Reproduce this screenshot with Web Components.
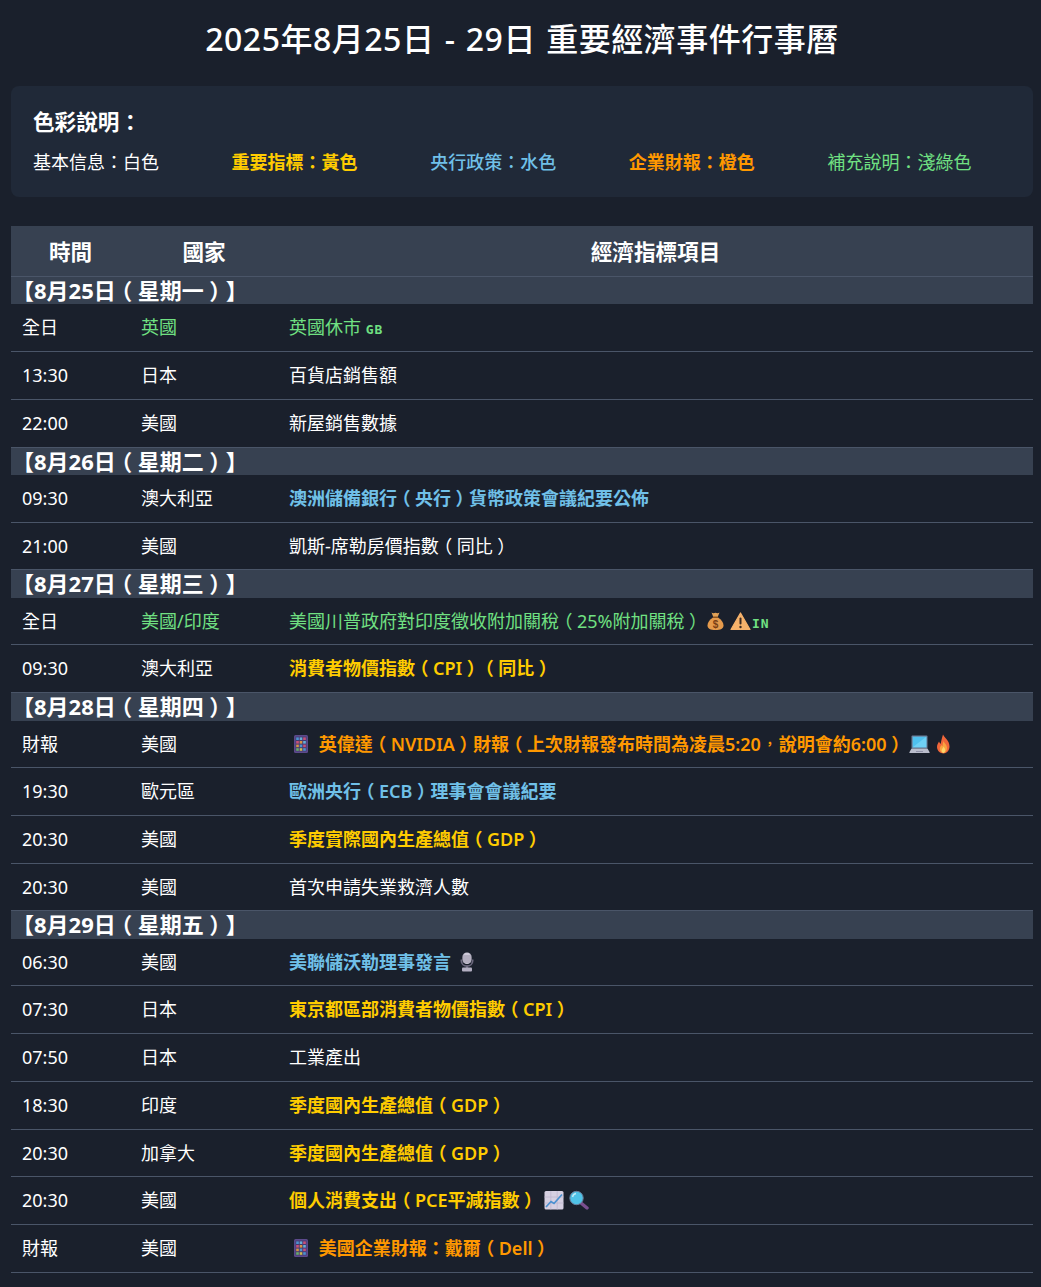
<!DOCTYPE html>
<html lang="zh-TW">
<head>
<meta charset="utf-8">
<title>重要經濟事件行事曆</title>
<style>
  html, body { margin: 0; background: #1a202c; }
  body {
    padding: 0 8px 15px 11px;
    color: #fff;
    font-family: "Noto Sans", "Noto Sans CJK TC", sans-serif;
    font-size: 18px;
    text-spacing-trim: space-all;
  }
</style>
</head>
<body>
<cal-title>2025年8月25日 - 29日 重要經濟事件行事曆</cal-title>

<cal-legend heading="色彩說明：">
  <span style="color:#fff">基本信息：白色</span>
  <span style="color:#ffcc00;font-weight:700">重要指標：黃色</span>
  <span style="color:#70c0e8;font-weight:500">央行政策：水色</span>
  <span style="color:#ff9800;font-weight:700">企業財報：橙色</span>
  <span style="color:#70e082">補充說明：淺綠色</span>
</cal-legend>

<cal-table>
  <cal-day>【8月25日（星期一）】</cal-day>
  <cal-row time="全日" country="英國" tone="note" country-tone="note">英國休市 <cal-flag>GB</cal-flag></cal-row>
  <cal-row time="13:30" country="日本">百貨店銷售額</cal-row>
  <cal-row time="22:00" country="美國">新屋銷售數據</cal-row>

  <cal-day>【8月26日（星期二）】</cal-day>
  <cal-row time="09:30" country="澳大利亞" tone="bank">澳洲儲備銀行（央行）貨幣政策會議紀要公佈</cal-row>
  <cal-row time="21:00" country="美國">凱斯-席勒房價指數（同比）</cal-row>

  <cal-day>【8月27日（星期三）】</cal-day>
  <cal-row time="全日" country="美國/印度" tone="note" country-tone="note">美國川普政府對印度徵收附加關稅（25%附加關稅）<cal-icon name="money"></cal-icon><cal-icon name="warning"></cal-icon><cal-flag tight>IN</cal-flag></cal-row>
  <cal-row time="09:30" country="澳大利亞" tone="key">消費者物價指數（CPI）（同比）</cal-row>

  <cal-day>【8月28日（星期四）】</cal-day>
  <cal-row time="財報" country="美國" tone="earn"><cal-icon name="phone"></cal-icon> 英偉達（NVIDIA）財報（上次財報發布時間為凌晨5:20，說明會約6:00）<cal-icon name="laptop" style="margin-left:2px"></cal-icon><cal-icon name="fire"></cal-icon></cal-row>
  <cal-row time="19:30" country="歐元區" tone="bank">歐洲央行（ECB）理事會會議紀要</cal-row>
  <cal-row time="20:30" country="美國" tone="key">季度實際國內生產總值（GDP）</cal-row>
  <cal-row time="20:30" country="美國">首次申請失業救濟人數</cal-row>

  <cal-day>【8月29日（星期五）】</cal-day>
  <cal-row time="06:30" country="美國" tone="bank">美聯儲沃勒理事發言 <cal-icon name="mic"></cal-icon></cal-row>
  <cal-row time="07:30" country="日本" tone="key">東京都區部消費者物價指數（CPI）</cal-row>
  <cal-row time="07:50" country="日本">工業產出</cal-row>
  <cal-row time="18:30" country="印度" tone="key">季度國內生產總值（GDP）</cal-row>
  <cal-row time="20:30" country="加拿大" tone="key">季度國內生產總值（GDP）</cal-row>
  <cal-row time="20:30" country="美國" tone="key">個人消費支出（PCE平減指數） <cal-icon name="chart"></cal-icon><cal-icon name="search"></cal-icon></cal-row>
  <cal-row time="財報" country="美國" tone="earn"><cal-icon name="phone"></cal-icon> 美國企業財報：戴爾（Dell）</cal-row>
</cal-table>

<script>
const ICONS = {
  money: `<path d="M8.500 1.500c1.200 .9 2.500 .9 4 .2 1.500 .7 2.800 .7 4-.2l-1.800 4.500h-4.400z" fill="#e2a257"/>
    <path d="M10 6.500h5c3.500 2 5.500 5 5.500 8 0 3.200-2.800 4.500-8 4.500s-8-1.300-8-4.500c0-3 2-6 5.500-8z" fill="#e59a4c"/>
    <rect x="9.800" y="5.400" width="5.400" height="1.500" rx=".7" fill="#8a5320"/>
    <text x="12.500" y="16.500" font-size="10" font-weight="700" text-anchor="middle" fill="#7a3f14" font-family="Liberation Sans">$</text>`,
  warning: `<path d="M12.500 2 22 18.500H3z" fill="#f6b26b" stroke="#f6b26b" stroke-width="1.200" stroke-linejoin="round"/>
    <rect x="11.500" y="6.500" width="2" height="7" rx="1" fill="#3a2a22"/>
    <circle cx="12.500" cy="16" r="1.200" fill="#3a2a22"/>`,
  phone: `<rect x="5" y="1" width="14" height="18" rx="1.500" fill="#5c4a8c"/>
    <rect x="6.500" y="2.500" width="11" height="15" fill="#443a70"/>
    <g opacity=".85">
      <rect x="7.200" y="3.400" width="2.600" height="2.600" fill="#4fa3e0"/><rect x="10.700" y="3.400" width="2.600" height="2.600" fill="#6fc4ea"/><rect x="14.200" y="3.400" width="2.600" height="2.600" fill="#e0567a"/>
      <rect x="7.200" y="7" width="2.600" height="2.600" fill="#e0567a"/><rect x="10.700" y="7" width="2.600" height="2.600" fill="#f2a33c"/><rect x="14.200" y="7" width="2.600" height="2.600" fill="#6fc4ea"/>
      <rect x="7.200" y="10.600" width="2.600" height="2.600" fill="#f2a33c"/><rect x="10.700" y="10.600" width="2.600" height="2.600" fill="#4fa3e0"/><rect x="14.200" y="10.600" width="2.600" height="2.600" fill="#e0567a"/>
      <rect x="7.200" y="14.200" width="2.600" height="2.600" fill="#6fc46a"/><rect x="10.700" y="14.200" width="2.600" height="2.600" fill="#e8d24a"/><rect x="14.200" y="14.200" width="2.600" height="2.600" fill="#4fa3e0"/>
    </g>`,
  laptop: `<rect x="4.500" y="1.500" width="16" height="13" rx="1" fill="#6d7f99"/>
    <rect x="5.700" y="2.700" width="13.600" height="10.600" fill="#4fc0ee"/>
    <path d="M5.700 13.300 19.300 2.700v10.600z" fill="#6fd0f4"/>
    <path d="M4.500 14.500h16l2 3.500a.6.6 0 0 1-.5 1H3a.6.6 0 0 1-.5-1z" fill="#b9bccb"/>
    <rect x="9" y="17" width="7" height="1" fill="#8e90a6"/>`,
  fire: `<path d="M11 .5c1 3 6.500 5.500 6.500 12 0 4-2.800 7-6 7s-6.500-2.800-6.500-6.500c0-2.500 1.200-3.800 2-5.500.5 1.200 1 2 1.800 2.300C9 7 10 4 11 .5z" fill="#f0663a"/>
    <path d="M11.500 7c.6 2 3.500 3.500 3.500 7 0 2.800-1.700 5-3.500 5s-3.700-1.800-3.700-4c0-1.800 1-2.700 1.700-4 .4 .8 .7 1 1 1.200.1-1.700.4-3.300 1-5.200z" fill="#f9a33f"/>
    <path d="M11.500 12.500c.4 1 1.800 1.800 1.800 3.800 0 1.500-.9 2.600-1.800 2.600s-1.900-.9-1.900-2.400c0-1.600 1.500-2.500 1.900-4z" fill="#fbd46a"/>`,
  mic: `<rect x="6.500" y=".5" width="9" height="11.500" rx="4.500" fill="#cdc9d8"/>
    <path d="M6.500 4h9M6.500 6h9M6.500 8h9M6.500 10h9" stroke="#8d899c" stroke-width=".8"/>
    <path d="M5.300 7.500v1.500c0 3 2.700 5 5.700 5s5.700-2 5.700-5V7.500" fill="none" stroke="#6c687e" stroke-width="1.600"/>
    <rect x="9.800" y="13.500" width="2.400" height="2.500" fill="#6c687e"/>
    <rect x="6" y="15.500" width="10" height="4" rx="1" fill="#b3afc2"/>`,
  chart: `<rect x="2.500" y="1" width="19" height="18.500" rx="1.500" fill="#d6d0e2"/>
    <path d="M2.500 7h19M2.500 13h19M8.800 1v18.500M15.200 1v18.500" stroke="#bfb8d0" stroke-width=".8"/>
    <path d="M4 17 9 11.500 12 13.500 20 4.500" fill="none" stroke="#4a90d0" stroke-width="1.700"/>`,
  search: `<path d="M14 13 20 18" stroke="#7a4f90" stroke-width="3.400" stroke-linecap="round"/>
    <circle cx="9.500" cy="8" r="6.700" fill="#4fc3e8" stroke="#6b7f9c" stroke-width="1"/>
    <path d="M5.500 7a4.500 4.500 0 0 1 3.500-3.500" fill="none" stroke="#bfeaf7" stroke-width="1.400"/>`
};

class CalIcon extends HTMLElement {
  constructor() {
    super();
    this.attachShadow({ mode: 'open' }).innerHTML = `
      <style>
        :host { display: inline-block; width: 25px; height: 20px; vertical-align: -3px; }
        svg { display: block; }
      </style>
      <svg width="25" height="20" viewBox="0 0 25 20" aria-hidden="true">${ICONS[this.getAttribute('name')] || ''}</svg>`;
  }
}

class CalFlag extends HTMLElement {
  constructor() {
    super();
    this.attachShadow({ mode: 'open' }).innerHTML = `
      <style>
        :host { font: 700 13px/1 "DejaVu Sans Mono", monospace; letter-spacing: 1px; }
        :host([tight]) { margin-left: -9.500px; }
      </style><slot></slot>`;
  }
}

// full-width brackets sit in the middle of their em box in the reference
class CalPunct extends HTMLElement {
  constructor() {
    super();
    this.attachShadow({ mode: 'open' }).innerHTML = `
      <style>
        :host { display: inline-block; width: 1em; text-align: center; font-feature-settings: "halt"; }
        :host([lift]) { font-size: 0.7em; width: 1.430em; line-height: 1; transform: translateY(-0.25em); }
      </style><slot></slot>`;
  }
}

function centerPunct(el) {
  const walker = document.createTreeWalker(el, NodeFilter.SHOW_TEXT);
  const nodes = [];
  while (walker.nextNode()) nodes.push(walker.currentNode);
  nodes.forEach(node => {
    if (!/[（），]/.test(node.data)) return;
    const frag = document.createDocumentFragment();
    node.data.split(/([（），])/).forEach(part => {
      if (/^[（），]$/.test(part)) {
        const p = document.createElement('cal-punct');
        if (part === '，') p.setAttribute('lift', '');
        p.textContent = part;
        frag.appendChild(p);
      } else if (part) {
        frag.appendChild(document.createTextNode(part));
      }
    });
    node.replaceWith(frag);
  });
}

class CalTitle extends HTMLElement {
  constructor() {
    super();
    this.attachShadow({ mode: 'open' }).innerHTML = `
      <style>
        :host { display: block; padding: 15px 0 23px; text-align: center; }
        h1 {
          margin: 0;
          font-size: 32px;
          line-height: 48px;
          font-weight: 500;
          letter-spacing: 0.5px;
          word-spacing: 1.500px;
          color: #fff;
        }
      </style>
      <h1><slot></slot></h1>`;
  }
}

class CalLegend extends HTMLElement {
  constructor() {
    super();
    this.attachShadow({ mode: 'open' }).innerHTML = `
      <style>
        :host {
          display: block;
          margin-bottom: 29px;
          padding: 22px 22px 20px;
          background: #202938;
          border-radius: 8px;
        }
        h3 { margin: 0 0 12px; font-size: 21.600px; line-height: 28px; font-weight: 700; }
        .items { display: grid; grid-template-columns: repeat(5, 1fr); gap: 15px; line-height: 29px; }
      </style>
      <h3>${this.getAttribute('heading')}</h3>
      <div class="items"><slot></slot></div>`;
  }
}

class CalTable extends HTMLElement {
  constructor() {
    super();
    this.attachShadow({ mode: 'open' }).innerHTML = `
      <style>
        :host { display: block; --cols: 119px 148px 1fr; }
        .head {
          display: grid;
          grid-template-columns: var(--cols);
          height: 48px;
          padding-bottom: 2px;
          align-items: center;
          text-align: center;
          background: #374151;
          border-bottom: 1px solid #4a5568;
          font-size: 21.600px;
          font-weight: 700;
        }
      </style>
      <div class="head"><span>時間</span><span>國家</span><span>經濟指標項目</span></div>
      <slot></slot>`;
  }
}

class CalDay extends HTMLElement {
  constructor() {
    super();
    this.attachShadow({ mode: 'open' }).innerHTML = `
      <style>
        :host {
          display: block;
          padding-left: 1px;
          background: #374151;
          font-size: 22px;
          font-weight: 700;
          line-height: 27.400px;
          white-space: nowrap;
        }
      </style>
      <slot></slot>`;
  }
}

const TONES = {
  note: 'color: #70e082;',
  key: 'color: #ffcc00; font-weight: 600;',
  bank: 'color: #70c0e8; font-weight: 600;',
  earn: 'color: #ff9800; font-weight: 600;'
};

class CalRow extends HTMLElement {
  constructor() {
    super();
    const tone = TONES[this.getAttribute('tone')] || '';
    const countryTone = TONES[this.getAttribute('country-tone')] || '';
    this.attachShadow({ mode: 'open' }).innerHTML = `
      <style>
        :host {
          display: grid;
          grid-template-columns: var(--cols);
          border-bottom: 1px solid #4a5568;
          line-height: 28.700px;
        }
        div { padding: 9px 11px; white-space: nowrap; }
      </style>
      <div>${this.getAttribute('time')}</div>
      <div style="${countryTone}">${this.getAttribute('country')}</div>
      <div style="${tone}"><slot></slot></div>`;
  }
}

customElements.define('cal-icon', CalIcon);
customElements.define('cal-flag', CalFlag);
customElements.define('cal-punct', CalPunct);
customElements.define('cal-title', CalTitle);
customElements.define('cal-legend', CalLegend);
customElements.define('cal-table', CalTable);
customElements.define('cal-day', CalDay);
customElements.define('cal-row', CalRow);

document.querySelectorAll('cal-day, cal-row').forEach(centerPunct);
</script>
</body>
</html>
